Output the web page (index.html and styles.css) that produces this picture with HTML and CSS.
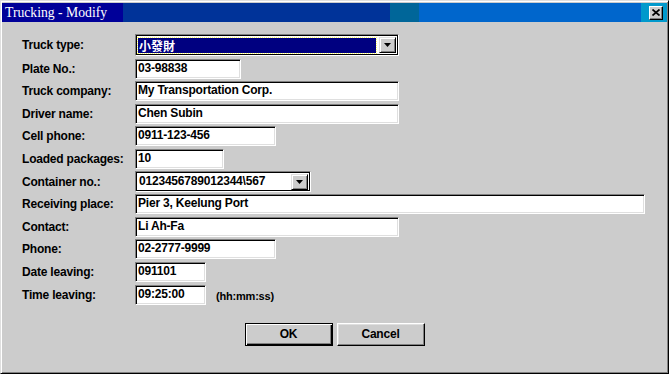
FILE: index.html
```html
<!DOCTYPE html>
<html lang="en">
<head>
  <meta charset="UTF-8">
  <title>Trucking - Modify</title>
  <link rel="stylesheet" href="styles.css">
</head>
<body>
  <div class="window">
    <div class="titlebar">
      <span class="title">Trucking - Modify</span>
      <span class="close-btn">
        <svg width="8" height="7" viewBox="0 0 8 7"><path d="M0.5 0.5 L7.5 6.5 M7.5 0.5 L0.5 6.5" stroke="#000" stroke-width="1.7" fill="none"/></svg>
      </span>
    </div>

    <div class="content">
      <div class="form">
        <label>Truck type:</label>
        <div class="combo w264 tall">
          <span class="combo-value selected"><span class="cjk">小發財</span></span>
          <span class="combo-btn"><svg width="7" height="4" viewBox="0 0 7 4"><polygon points="0,0 7,0 3.5,4" fill="#000"/></svg></span>
        </div>

        <label>Plate No.:</label>
        <div class="field w106">03-98838</div>

        <label>Truck company:</label>
        <div class="field w264">My Transportation Corp.</div>

        <label>Driver name:</label>
        <div class="field w264">Chen Subin</div>

        <label>Cell phone:</label>
        <div class="field w141">0911-123-456</div>

        <label>Loaded packages:</label>
        <div class="field w89">10</div>

        <label>Container no.:</label>
        <div class="combo w176">
          <span class="combo-value">0123456789012344\567</span>
          <span class="combo-btn"><svg width="7" height="4" viewBox="0 0 7 4"><polygon points="0,0 7,0 3.5,4" fill="#000"/></svg></span>
        </div>

        <label>Receiving place:</label>
        <div class="field w510">Pier 3, Keelung Port</div>

        <label>Contact:</label>
        <div class="field w264">Li Ah-Fa</div>

        <label>Phone:</label>
        <div class="field w141">02-2777-9999</div>

        <label>Date leaving:</label>
        <div class="field w71">091101</div>

        <label>Time leaving:</label>
        <div class="inline">
          <div class="field w71">09:25:00</div>
          <span class="hint">(hh:mm:ss)</span>
        </div>
      </div>

      <div class="buttons">
        <button class="btn default" type="button">OK</button>
        <button class="btn" type="button">Cancel</button>
      </div>
    </div>
  </div>
</body>
</html>
```

FILE: styles.css
```css
body {
  margin: 0;
  background: #fff;
  font-family: "Liberation Sans", Arial, sans-serif;
}

.window {
  width: 669px;
  height: 374px;
  box-sizing: border-box;
  background: #cccccc;
  border: 1px solid;
  border-color: #dfdfdf #000 #000 #dfdfdf;
  box-shadow: inset 1px 1px #fff, inset -1px -1px #808080;
  padding: 2px 1px 1px 1px;
}

.titlebar {
  height: 19px;
  display: flex;
  align-items: center;
  justify-content: space-between;
  padding: 0 4px 0 3px;
  background: linear-gradient(to right,
    #000099 0, #000099 121px,
    #003399 121px, #003399 388px,
    #006699 388px, #006699 417px,
    #0066cc 417px, #0066cc 639px,
    #0099cc 639px, #0099cc 100%);
}

.title {
  color: #fff;
  font-family: "Liberation Serif", "Times New Roman", serif;
  font-size: 13.7px;
}

.close-btn {
  width: 14px;
  height: 14px;
  box-sizing: border-box;
  background: #cccccc;
  border: 1px solid;
  border-color: #fff #000 #000 #fff;
  box-shadow: inset -1px -1px #808080;
  display: flex;
  align-items: center;
  justify-content: center;
}

.content {
  padding: 12px 0 0 20px;
}

.form {
  display: grid;
  grid-template-columns: 113px 1fr;
  grid-template-rows: 22px repeat(11, 20px);
  row-gap: 2.6px;
  align-items: center;
}

label, .field, .combo-value, .hint, .btn {
  font-size: 12px;
  font-weight: bold;
  letter-spacing: -0.2px;
  color: #000;
}

.field {
  height: 20px;
  box-sizing: border-box;
  background: #fff;
  border: 1px solid;
  border-color: #808080 #fff #fff #808080;
  box-shadow: inset 1px 1px #000, inset -1px -1px #dfdfdf;
  padding-left: 2px;
  line-height: 17px;
  white-space: nowrap;
}

.w264 { width: 264px; }
.w106 { width: 106px; }
.w141 { width: 141px; }
.w89 { width: 89px; }
.w176 { width: 176px; }
.w510 { width: 510px; }
.w71 { width: 71px; }

.combo {
  height: 21px;
  box-sizing: border-box;
  display: flex;
  align-items: center;
  background: #fff;
  border: 1px solid;
  border-color: #808080 #fff #fff #808080;
  box-shadow: inset 0 0 0 1px #000;
  padding: 0 2px 0 2px;
}

.combo.tall {
  height: 22px;
}

.combo-value {
  flex: 1;
  height: 15px;
  line-height: 15px;
  padding-left: 1px;
  white-space: nowrap;
}

.combo-value.selected {
  background: #000080;
  color: #fff;
  outline: 1px dotted #ffff66;
  margin-right: 3px;
}

.cjk {
  font-family: "Noto Sans CJK TC", sans-serif;
  font-size: 12px;
  font-weight: bold;
  letter-spacing: 0;
}

.combo-btn {
  width: 17px;
  height: 16px;
  box-sizing: border-box;
  background: #cccccc;
  border: 1px solid;
  border-color: #dfdfdf #000 #000 #dfdfdf;
  box-shadow: inset 1px 1px #fff, inset -1px -1px #808080;
  display: flex;
  align-items: center;
  justify-content: center;
}

.inline {
  display: flex;
  align-items: center;
  gap: 10px;
}

.hint {
  font-size: 11px;
  padding-top: 3px;
}

.buttons {
  display: flex;
  justify-content: center;
  gap: 4px;
  margin-top: 18px;
  padding-right: 20px;
}

.btn {
  width: 88px;
  height: 23px;
  box-sizing: border-box;
  background: #cccccc;
  font-family: "Liberation Sans", Arial, sans-serif;
  border: 1px solid;
  border-color: #fff #000 #000 #fff;
  box-shadow: inset -1px -1px #808080, inset 1px 1px #dfdfdf;
  padding: 0;
}

.btn.default {
  border-color: #000;
  box-shadow: inset 1px 1px #fff, inset -1px -1px #000, inset -2px -2px #808080;
}
```
